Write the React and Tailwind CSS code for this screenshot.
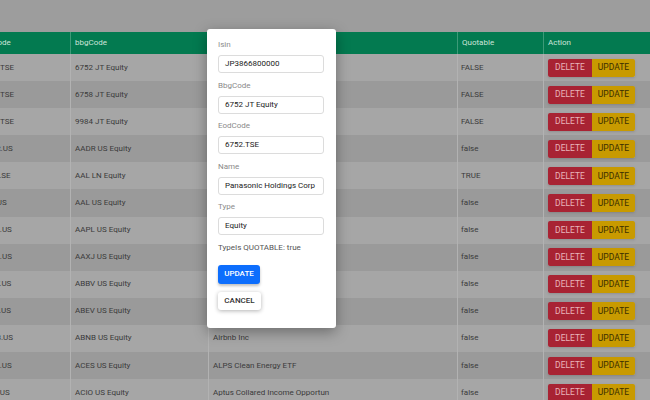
const rows = [
  ["6752.TSE", "6752 JT Equity", "Panasonic Holdings", "FALSE"],
  ["6758.TSE", "6758 JT Equity", "Sony Group Corp", "FALSE"],
  ["9984.TSE", "9984 JT Equity", "SoftBank Group", "FALSE"],
  ["AADR.US", "AADR US Equity", "AdvisorShares", "false"],
  ["AAL.LSE", "AAL LN Equity", "Anglo American", "TRUE"],
  ["AAL.US", "AAL US Equity", "American Airlines", "false"],
  ["AAPL.US", "AAPL US Equity", "Apple Inc", "false"],
  ["AAXJ.US", "AAXJ US Equity", "iShares MSCI", "false"],
  ["ABBV.US", "ABBV US Equity", "AbbVie Inc", "false"],
  ["ABEV.US", "ABEV US Equity", "Ambev SA", "false"],
  ["ABNB.US", "ABNB US Equity", "Airbnb Inc", "false"],
  ["ACES.US", "ACES US Equity", "ALPS Clean Energy ETF", "false"],
  ["ACIO.US", "ACIO US Equity", "Aptus Collared Income Opportun", "false"],
];

function Field({ label, value }) {
  return (
    <div className="mb-[7.5px]">
      <div className="text-[8px] leading-[10px] text-[#8a8a8a] mb-[5px]">{label}</div>
      <div className="h-[18px] w-[106px] border border-[#dcdcdc] rounded-[3px] flex items-center pl-[6px] text-[8px] text-[#222] whitespace-nowrap overflow-hidden">
        {value}
      </div>
    </div>
  );
}

export default function App() {
  return (
    <div className="relative w-[650px] h-[400px] overflow-hidden bg-[#9d9d9d]" style={{ fontFamily: "Roboto, 'Liberation Sans', sans-serif" }}>
      <div className="h-[32px]"></div>
      <div className="ml-[-24px] text-[8px]">
        <div className="flex h-[22px] bg-[#037a50] text-[#cde5da] items-center">
          <div className="w-[94px] pl-[3px]">eodCode</div>
          <div className="w-[138px] h-full flex items-center border-l border-[#3d9a78] pl-[4px]">bbgCode</div>
          <div className="w-[249px] h-full flex items-center border-l border-[#3d9a78] pl-[4px]">name</div>
          <div className="w-[86px] h-full flex items-center border-l border-[#3d9a78] pl-[4px]">Quotable</div>
          <div className="flex-1 h-full flex items-center border-l border-[#3d9a78] pl-[4px]">Action</div>
        </div>
        {rows.map((r, i) => (
          <div key={i} className={`flex h-[27.1px] items-center text-[#3a3a3a] ${i % 2 === 0 ? "bg-[#a6a6a6]" : "bg-[#9a9a9a]"}`}>
            <div className="w-[94px] pl-[4px]">{r[0]}</div>
            <div className="w-[138px] h-full flex items-center border-l border-[#b2b2b2] pl-[4px]">{r[1]}</div>
            <div className="w-[249px] h-full flex items-center border-l border-[#b2b2b2] pl-[4px]">{r[2]}</div>
            <div className="w-[86px] h-full flex items-center border-l border-[#b2b2b2] pl-[3px]">{r[3]}</div>
            <div className="flex-1 h-full flex items-center border-l border-[#b2b2b2] pl-[4px]">
              <div className="flex shadow-sm">
                <div className="w-[44px] h-[18px] flex items-center justify-center bg-[#a82333] text-[#e9b5bb] rounded-l-[2px] text-[8.5px]">DELETE</div>
                <div className="w-[43px] h-[18px] flex items-center justify-center bg-[#c89a00] text-[#3a2f00] rounded-r-[2px] text-[8.5px]">UPDATE</div>
              </div>
            </div>
          </div>
        ))}
      </div>

      <div className="absolute left-[207px] top-[29px] w-[129px] h-[299px] bg-white rounded-[3px] shadow-[0_4px_14px_rgba(0,0,0,0.35)] pl-[11px] pt-[11px]">
        <Field label="Isin" value="JP3866800000" />
        <Field label="BbgCode" value="6752 JT Equity" />
        <Field label="EodCode" value="6752.TSE" />
        <Field label="Name" value="Panasonic Holdings Corp" />
        <Field label="Type" value="Equity" />
        <div className="text-[8px] leading-[10px] text-[#555]">TypeIs QUOTABLE: true</div>
        <div className="mt-[12px] w-[42px] h-[19px] bg-[#0d6efd] rounded-[3px] text-white text-[8px] font-medium flex items-center justify-center shadow-[0_2px_3px_rgba(0,0,0,0.25)]">UPDATE</div>
        <div className="mt-[8px] w-[43px] h-[18px] bg-white rounded-[3px] text-[#333] text-[8px] font-medium flex items-center justify-center shadow-[0_1px_4px_rgba(0,0,0,0.3)]">CANCEL</div>
      </div>
    </div>
  );
}
